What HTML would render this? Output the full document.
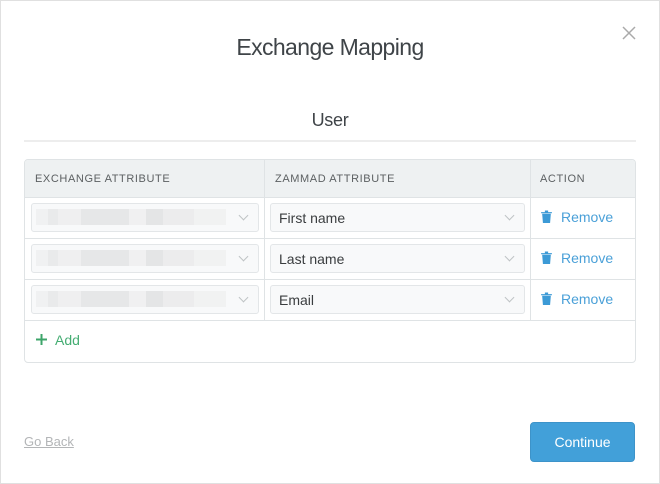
<!DOCTYPE html>
<html><head><meta charset="utf-8"><style>
*{box-sizing:border-box;margin:0;padding:0}
body{width:660px;height:484px;background:#fff;font-family:"Liberation Sans",sans-serif;position:relative;overflow:hidden;color:#38393a}
.frame{position:absolute;left:0;top:0;width:660px;height:484px;border:1px solid #e0e0e0;pointer-events:none}
.a{position:absolute}
.title{left:0;width:660px;top:34px;text-align:center;font-size:23px;letter-spacing:-0.6px;color:#3f4448}
.user{left:0;width:660px;top:110px;text-align:center;font-size:18px;letter-spacing:-0.3px;color:#3f4448}
.hr{left:24px;width:612px;top:140px;height:2px;background:#ededed}
.tbl{left:24px;top:159px;width:612px;height:204px;border:1px solid #dfe3e5;border-radius:4px;overflow:hidden}
.hd{left:0;top:0;width:610px;height:38px;background:#eef1f2;border-bottom:1px solid #dfe3e5}
.hd span{position:absolute;top:13px;font-size:11px;letter-spacing:0.6px;color:#5c6062}
.vl{width:1px;background:#dfe3e5;top:0}
.hl{left:0;width:610px;height:1px;background:#dfe3e5}
.sel{height:29px;border:1px solid #e3e6e8;border-radius:3px;background:#f8f9fa}
.sel i{position:absolute;right:11px;top:8px;width:7px;height:7px;border-right:1px solid #bfc3c5;border-bottom:1px solid #bfc3c5;transform:rotate(45deg)}
.sel b{position:absolute;left:8px;top:6px;font-weight:normal;font-size:14px;color:#3a3d3f}
.blur{position:absolute;left:4px;top:5px;width:190px;height:16px;background:linear-gradient(90deg,#f0f1f2 0,#f0f1f2 12px,#e9eaeb 12px,#e9eaeb 22px,#efeff0 22px,#efeff0 45px,#e6e7e8 45px,#e6e7e8 93px,#f0f0f1 93px,#f0f0f1 110px,#e4e5e6 110px,#e4e5e6 127px,#ececed 127px,#ececed 158px,#f1f2f2 158px,#f1f2f2 190px)}
.rm{font-size:14px;color:#4aa0d8}
.trash{width:11px;height:13px}
</style></head><body>
<div class="frame"></div>
<div class="a title">Exchange Mapping</div>
<svg class="a" style="left:622px;top:26px" width="14" height="14"><path d="M1 1L13 13M13 1L1 13" stroke="#aaa" stroke-width="1.5"/></svg>
<div class="a user">User</div>
<div class="a hr"></div>
<div class="a tbl">
 <div class="a hd"><span style="left:10px">EXCHANGE ATTRIBUTE</span><span style="left:250px">ZAMMAD ATTRIBUTE</span><span style="left:515px">ACTION</span></div>
 <div class="a vl" style="left:239px;height:160px"></div>
 <div class="a vl" style="left:505px;height:160px"></div>
 <div class="a hl" style="top:78px"></div>
 <div class="a hl" style="top:119px"></div>
 <div class="a hl" style="top:160px"></div>

 <div class="a sel" style="left:6px;top:43px;width:228px"><div class="blur"></div><i></i></div>
 <div class="a sel" style="left:245px;top:43px;width:255px"><b>First name</b><i></i></div>
 <div class="a sel" style="left:6px;top:84px;width:228px"><div class="blur"></div><i></i></div>
 <div class="a sel" style="left:245px;top:84px;width:255px"><b>Last name</b><i></i></div>
 <div class="a sel" style="left:6px;top:125px;width:228px"><div class="blur"></div><i></i></div>
 <div class="a sel" style="left:245px;top:125px;width:255px"><b>Email</b><i></i></div>

 <svg class="a trash" style="left:516px;top:50px" viewBox="0 0 10 12"><path d="M0 2H10V3H0Z M3.5 0.5H6.5V2H3.5Z M1 3.5H9L8.3 12H1.7Z" fill="#3c9ad6"/></svg>
 <div class="a rm" style="left:536px;top:49px">Remove</div>
 <svg class="a trash" style="left:516px;top:91px" viewBox="0 0 10 12"><path d="M0 2H10V3H0Z M3.5 0.5H6.5V2H3.5Z M1 3.5H9L8.3 12H1.7Z" fill="#3c9ad6"/></svg>
 <div class="a rm" style="left:536px;top:90px">Remove</div>
 <svg class="a trash" style="left:516px;top:132px" viewBox="0 0 10 12"><path d="M0 2H10V3H0Z M3.5 0.5H6.5V2H3.5Z M1 3.5H9L8.3 12H1.7Z" fill="#3c9ad6"/></svg>
 <div class="a rm" style="left:536px;top:131px">Remove</div>

 <svg class="a" style="left:11px;top:174px" width="11" height="11"><path d="M5.5 0V11M0 5.5H11" stroke="#3da46a" stroke-width="2"/></svg>
 <div class="a" style="left:30px;top:172px;font-size:14px;color:#45ad73">Add</div>
</div>
<div class="a" style="left:24px;top:434px;font-size:13px;color:#b3b5b7;text-decoration:underline">Go Back</div>
<div class="a" style="left:530px;top:422px;width:105px;height:40px;background:#42a0d9;border:1px solid #3d93c9;border-radius:4px;color:#fff;font-size:14px;text-align:center;line-height:38px">Continue</div>
</body></html>
